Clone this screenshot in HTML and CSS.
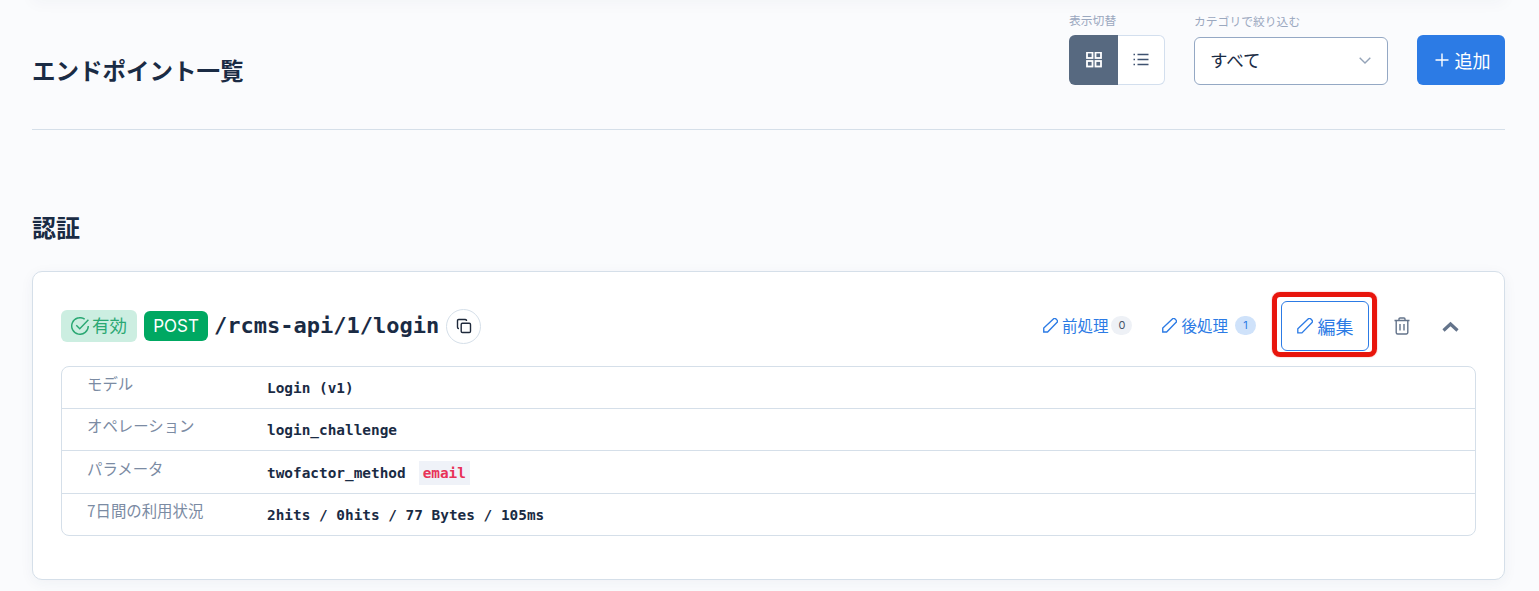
FILE: index.html
```html
<!DOCTYPE html>
<html lang="ja">
<head>
<meta charset="utf-8">
<title>エンドポイント一覧</title>
<link rel="stylesheet" href="styles.css">
</head>
<body>
<div class="top-shadow"></div>
<main class="page">
  <header class="head">
    <h1 class="title">エンドポイント一覧</h1>
    <div class="controls">
      <div class="field view-field">
        <span class="field-label">表示切替</span>
        <div class="toggle">
          <button class="toggle-btn active" type="button">
            <svg width="16" height="16" viewBox="0 0 16 16" fill="none" stroke="currentColor" stroke-width="1.8"><rect x="1" y="0.5" width="5.5" height="5.5"/><rect x="9.5" y="0.5" width="5.5" height="5.5"/><rect x="1" y="9" width="5.5" height="5.5"/><rect x="9.5" y="9" width="5.5" height="5.5"/></svg>
          </button>
          <button class="toggle-btn" type="button">
            <svg width="16" height="16" viewBox="0 0 16 16" fill="none" stroke="currentColor" stroke-width="1.6"><path d="M4.5 2.5h11M4.5 7.5h11M4.5 12.5h11"/><path d="M0.5 2.5h1.5M0.5 7.5h1.5M0.5 12.5h1.5"/></svg>
          </button>
        </div>
      </div>
      <div class="field cat-field">
        <span class="field-label">カテゴリで絞り込む</span>
        <div class="select">
          <span>すべて</span>
          <svg width="12" height="7" viewBox="0 0 12 7" fill="none" stroke="#94a3b8" stroke-width="1.4"><path d="M0.7 0.7 6 6l5.3-5.3"/></svg>
        </div>
      </div>
      <button class="add-btn" type="button">
        <svg width="14" height="14" viewBox="0 0 14 14" fill="none" stroke="currentColor" stroke-width="1.4"><path d="M7 0.5v13M0.5 7h13"/></svg>
        <span>追加</span>
      </button>
    </div>
  </header>

  <h2 class="section-title">認証</h2>

  <section class="card">
    <div class="card-head">
      <div class="card-title">
        <span class="badge-ok">
          <svg width="18" height="18" viewBox="1 1 15 15" fill="none" stroke="currentColor" stroke-width="1.2"><path d="M15.4 8.5a6.9 6.9 0 1 1-3-5.7"/><path d="M5.4 7.8 8.3 10.7 15.5 3.2"/></svg>
          <span>有効</span>
        </span>
        <span class="badge-post">POST</span>
        <span class="path">/rcms-api/1/login</span>
        <button class="copy" type="button">
          <svg width="16" height="16" viewBox="0 0 16 16" fill="none" stroke="#1e293b" stroke-width="1.4"><rect x="5.2" y="5.2" width="9.3" height="9.3" rx="1.2"/><path d="M10.5 3V2.7a1.2 1.2 0 0 0-1.2-1.2H2.7a1.2 1.2 0 0 0-1.2 1.2v6.6a1.2 1.2 0 0 0 1.2 1.2H3"/></svg>
        </button>
      </div>
      <div class="card-actions">
        <a class="link">
          <svg class="pen" width="15" height="15" viewBox="1.3 0.8 12 12" fill="none" stroke="currentColor" stroke-width="1.1"><path d="M9.6 1.6a1.5 1.5 0 0 1 2.1 0l.7.7a1.5 1.5 0 0 1 0 2.1L5 12H1.9v-3.1z"/></svg>
          <span>前処理</span><span class="count">0</span>
        </a>
        <a class="link">
          <svg class="pen" width="15" height="15" viewBox="1.3 0.8 12 12" fill="none" stroke="currentColor" stroke-width="1.1"><path d="M9.6 1.6a1.5 1.5 0 0 1 2.1 0l.7.7a1.5 1.5 0 0 1 0 2.1L5 12H1.9v-3.1z"/></svg>
          <span>後処理</span><span class="count on">1</span>
        </a>
        <button class="edit" type="button">
          <svg width="16" height="16" viewBox="1.3 0.8 12 12" fill="none" stroke="currentColor" stroke-width="1"><path d="M9.6 1.6a1.5 1.5 0 0 1 2.1 0l.7.7a1.5 1.5 0 0 1 0 2.1L5 12H1.9v-3.1z"/></svg>
          <span>編集</span>
          <span class="mark"></span>
        </button>
        <button class="icon-btn trash" type="button">
          <svg width="16" height="18" viewBox="0 0 16 18" fill="none" stroke="#64748b" stroke-width="1.4"><path d="M0.5 3.5h15M5 3.5V2a1 1 0 0 1 1-1h4a1 1 0 0 1 1 1v1.5M2.2 3.5v12a1.5 1.5 0 0 0 1.5 1.5h8.6a1.5 1.5 0 0 0 1.5-1.5v-12M6 7v6.5M10 7v6.5"/></svg>
        </button>
        <button class="icon-btn chev" type="button">
          <svg width="17" height="11" viewBox="0 0 17 11" fill="none" stroke="#64748b" stroke-width="3.2"><path d="M1.5 9.5 8.5 3l7 6.5"/></svg>
        </button>
      </div>
    </div>
    <div class="table">
      <div class="row"><div class="key">モデル</div><div class="val"><code>Login (v1)</code></div></div>
      <div class="row"><div class="key">オペレーション</div><div class="val"><code>login_challenge</code></div></div>
      <div class="row row-tall"><div class="key">パラメータ</div><div class="val"><code>twofactor_method</code><code class="chip">email</code></div></div>
      <div class="row"><div class="key">7日間の利用状況</div><div class="val"><code>2hits / 0hits / 77 Bytes / 105ms</code></div></div>
    </div>
  </section>
</main>
</body>
</html>
```

FILE: styles.css
```css
* { box-sizing: border-box; }
html, body { margin: 0; height: 591px; overflow: hidden; }
body {
  background: #fafbfd;
  color: #1a2b44;
  font-family: Inter, "Noto Sans CJK JP", "Noto Sans", sans-serif;
  position: relative;
}
button { font: inherit; margin: 0; cursor: pointer; }
.top-shadow {
  position: absolute;
  left: 32px; right: 34px; top: -20px;
  height: 20px;
  box-shadow: 0 3px 16px rgba(30, 50, 90, 0.035);
}
.page { position: relative; padding: 14px 34px 0 32px; }

.head {
  display: flex;
  justify-content: space-between;
  align-items: center;
  height: 116px;
  padding-bottom: 45px;
  border-bottom: 1px solid #d5dfe9;
}
.title {
  margin: 42px 0 0;
  font-size: 23.5px;
  line-height: 34px;
  font-weight: 700;
  font-family: "Noto Sans CJK JP", sans-serif;
  color: #1a2b44;
}
.controls { display: flex; align-items: flex-end; }
.field { display: flex; flex-direction: column; }
.field-label {
  font-size: 11.8px;
  line-height: 14px;
  color: #9aa8bf;
  font-family: "Noto Sans CJK JP", sans-serif;
}
.view-field { width: 96px; }
.view-field .field-label { margin-bottom: 8px; margin-top: -1px; }
.cat-field { margin-left: 29px; width: 194px; }
.cat-field .field-label { margin-bottom: 9px; }
.toggle { display: flex; width: 96px; height: 50px; }
.toggle-btn {
  flex: none;
  width: 47px;
  border: 1px solid #d3dfee;
  border-left: 0;
  border-radius: 0 6px 6px 0;
  background: #fff;
  color: #3f5270;
  display: flex;
  align-items: center;
  justify-content: center;
  padding: 0;
}
.toggle-btn.active {
  width: 49px;
  border: 0;
  border-radius: 6px 0 0 6px;
  background: #576980;
  color: #fff;
}
.select {
  height: 48px;
  border: 1px solid #94a8c4;
  border-radius: 6px;
  background: #fff;
  display: flex;
  align-items: center;
  justify-content: space-between;
  padding: 0 16px 0 15px;
  font-size: 17.5px;
  font-family: "Noto Sans CJK JP", sans-serif;
}
.select span { margin-bottom: 2px; }
.add-btn {
  margin-left: 29px;
  width: 88px;
  height: 50px;
  border: 0;
  border-radius: 6px;
  background: #2c7be5;
  color: #fff;
  font-size: 18px;
  display: flex;
  align-items: center;
  justify-content: center;
  gap: 6px;
  padding: 0 0 0 3px;
  font-family: "Noto Sans CJK JP", sans-serif;
}

.section-title {
  margin: 79px 0 26px;
  font-size: 24px;
  line-height: 36px;
  font-weight: 700;
  font-family: "Noto Sans CJK JP", sans-serif;
}

.card {
  height: 309px;
  background: #fff;
  border: 1px solid #d5dfe9;
  border-radius: 10px;
  padding: 28px 28px 0;
  box-shadow: 0 3px 14px rgba(30, 50, 90, 0.05);
}
.card-head {
  display: flex;
  justify-content: space-between;
  align-items: center;
  height: 52px;
  margin-bottom: 14px;
}
.card-title { display: flex; align-items: center; }
.badge-ok {
  display: inline-flex;
  align-items: center;
  gap: 3px;
  height: 32px;
  width: 76px;
  padding: 0 0 0 10px;
  border-radius: 6px;
  background: #cceee1;
  color: #2aa873;
  font-size: 17.5px;
  font-family: "Noto Sans CJK JP", sans-serif;
}
.badge-ok span { margin-bottom: 3px; }
.badge-post {
  margin-left: 7px;
  display: inline-flex;
  align-items: center;
  justify-content: center;
  width: 64px;
  height: 30px;
  border-radius: 6px;
  background: #00a862;
  color: #fff;
  font-size: 17px;
}
.path {
  margin-left: 6px;
  font-family: "DejaVu Sans Mono", monospace;
  font-weight: 700;
  font-size: 22px;
  line-height: 30px;
  color: #1a2b44;
}
.copy {
  margin-left: 7px;
  width: 35px;
  height: 35px;
  border-radius: 50%;
  border: 1px solid #d5dfe9;
  background: #fff;
  display: flex;
  align-items: center;
  justify-content: center;
  padding: 0;
}
.card-actions { display: flex; align-items: center; }
.link {
  display: inline-flex;
  align-items: center;
  color: #2c7be5;
  font-size: 15.5px;
  font-family: "Noto Sans CJK JP", sans-serif;
  margin-right: 30px;
  padding-bottom: 2px;
}
.link + .link { margin-right: 25px; }
.pen { margin-right: 4px; }
.count {
  margin-left: 3px;
  min-width: 21px;
  height: 19px;
  border-radius: 10px;
  background: #eef1f6;
  color: #475569;
  font-size: 11px;
  display: inline-flex;
  align-items: center;
  justify-content: center;
  font-family: Inter, sans-serif;
}
.count.on { margin-left: 7px; background: #cfe2fa; color: #2c7be5; }
.edit {
  position: relative;
  width: 88px;
  height: 50px;
  border: 1px solid #2c7be5;
  border-radius: 6px;
  background: #fff;
  color: #2c7be5;
  font-size: 18px;
  font-family: "Noto Sans CJK JP", sans-serif;
  display: flex;
  align-items: center;
  justify-content: center;
  gap: 5px;
  padding: 0;
}
.mark {
  position: absolute;
  left: -10px; top: -10px;
  width: 105px; height: 65px;
  border: 5px solid #e8150c;
  border-radius: 8px;
  box-shadow: 0 0 1.5px rgba(232, 21, 12, 0.5);
  pointer-events: none;
}
.icon-btn {
  border: 0;
  background: none;
  padding: 0;
  display: flex;
  align-items: center;
  justify-content: center;
}
.trash { margin-left: 25px; width: 16px; }
.chev { margin-left: 32px; margin-right: 17px; width: 17px; }

.table {
  border: 1px solid #d5dfe9;
  border-radius: 8px;
}
.row {
  display: flex;
  height: 42px;
  border-top: 1px solid #d5dfe9;
}
.row:first-child { border-top: 0; height: 41px; }
.row-tall { height: 43px; }
.key {
  width: 205px;
  padding: 5px 0 0 25px;
  font-size: 15.4px;
  line-height: 22px;
  color: #7b8ba3;
  font-family: "Noto Sans CJK JP", sans-serif;
}
.row-tall .key { padding-top: 6px; }
.val { display: flex; align-items: center; padding-top: 1px; }
code {
  font-family: "DejaVu Sans Mono", monospace;
  font-weight: 700;
  font-size: 14.4px;
  color: #1a2b44;
}
.chip {
  margin-left: 13px;
  padding: 4px 4px;
  background: #eff2f8;
  color: #e83358;
}
```
